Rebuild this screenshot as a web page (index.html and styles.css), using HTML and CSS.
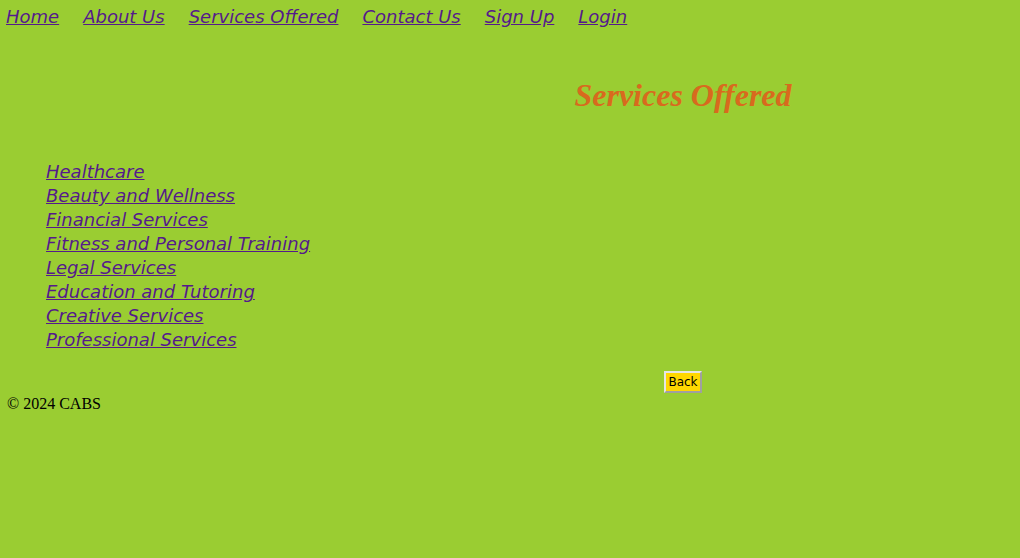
FILE: index.html
```html
<!DOCTYPE html>
<html lang="en">
<head>
<meta charset="utf-8">
<title>Services Offered</title>
<link rel="stylesheet" href="styles.css">
</head>
<body>
<nav class="nav">
  <a href="#">Home</a>
  <a href="#">About Us</a>
  <a href="#">Services Offered</a>
  <a href="#">Contact Us</a>
  <a href="#">Sign Up</a>
  <a href="#">Login</a>
</nav>
<main class="main">
  <h1 class="title">Services Offered</h1>
  <ul class="services">
    <li><a href="#">Healthcare</a></li>
    <li><a href="#">Beauty and Wellness</a></li>
    <li><a href="#">Financial Services</a></li>
    <li><a href="#">Fitness and Personal Training</a></li>
    <li><a href="#">Legal Services</a></li>
    <li><a href="#">Education and Tutoring</a></li>
    <li><a href="#">Creative Services</a></li>
    <li><a href="#">Professional Services</a></li>
  </ul>
  <div class="back-row"><button class="back" type="button">Back</button></div>
</main>
<footer class="footer">&copy; 2024 CABS</footer>
</body>
</html>
```
FILE: styles.css
```css
html, body {
  background: #9acd32;
}
body {
  margin: 0;
  padding: 6px 6px 0 6px;
  font-family: "Liberation Serif", serif;
  font-size: 16px;
  color: #000;
}
a {
  color: #551a8b;
  font-family: "DejaVu Sans", sans-serif;
  font-style: italic;
  font-size: 18px;
}
.nav {
  display: flex;
  gap: 24px;
  line-height: 21px;
}
.title {
  margin: 50px 0 0 346px;
  text-align: center;
  font-family: "Liberation Serif", serif;
  font-style: italic;
  font-weight: bold;
  font-size: 32px;
  line-height: 37px;
  color: #d86a1e;
}
.services {
  list-style: none;
  margin: 46px 0 0 0;
  padding-left: 40px;
  font-family: "DejaVu Sans", sans-serif;
  font-size: 18px;
  line-height: 24px;
}
.back-row {
  margin: 19px 0 0 346px;
  text-align: center;
  line-height: 0;
}
.back {
  font-family: "DejaVu Sans", sans-serif;
  font-size: 12px;
  padding: 2px 2px;
  background: #ffd700;
  border: 2px solid;
  border-color: #e6e6e6 #a0a0a0 #a0a0a0 #e6e6e6;
  color: #000;
  line-height: 14px;
}
.footer {
  margin-top: 2px;
  margin-left: 1px;
  line-height: 18px;
}
```
